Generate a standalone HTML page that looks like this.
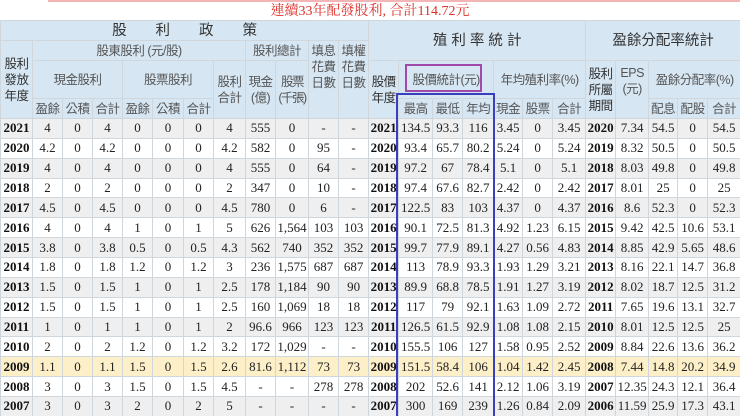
<!DOCTYPE html>
<html><head><meta charset="utf-8"><style>
html,body{margin:0;width:740px;height:416px;overflow:hidden}
body{background:#fff;position:relative;font-family:"Liberation Serif","Noto Serif CJK SC",serif;}
.top{position:absolute;left:48px;top:0;width:692px;height:2px;background:#f3b5b5}
.title{position:absolute;left:0;top:3px;width:740px;height:17px;text-align:center;color:#e0302a;font-size:14px;line-height:17px;font-family:"Liberation Serif","Noto Serif CJK TC",serif}
table{position:absolute;left:0;top:20px;border-collapse:collapse;table-layout:fixed;width:740px}
td{border:1px solid #cfd6dc;padding:0;text-align:center;font-size:13px;color:#222;overflow:hidden;white-space:nowrap}
thead td{background:#d6e6f2;color:#555;font-family:"Liberation Sans","Noto Sans CJK TC",sans-serif;font-size:12.5px;line-height:16px;letter-spacing:-0.5px}
thead td.k{color:#333;font-size:14.5px;letter-spacing:0}
tbody tr{height:19.87px}
tbody tr:nth-child(odd) td{background:#efefef}
tbody tr:nth-child(even) td{background:#fff}
tbody tr.y td{background:#fdf0c8}
td.b{font-weight:bold;color:#111}
.blue{position:absolute;left:396px;top:93px;width:95px;height:330px;border:2px solid #3a3fc0}
.pur{position:absolute;left:405px;top:64px;width:73px;height:24px;border:2px solid #a24aa8}
</style></head><body>
<div class="top"></div>
<div class="title">連續33年配發股利, 合計114.72元</div>
<table>
<colgroup>
<col style="width:32px"><col style="width:30px"><col style="width:30px"><col style="width:30px"><col style="width:30px"><col style="width:31px"><col style="width:30px"><col style="width:32px"><col style="width:30px"><col style="width:33px"><col style="width:30px"><col style="width:30px">
<col style="width:30px"><col style="width:34px"><col style="width:30px"><col style="width:31px"><col style="width:29px"><col style="width:30px"><col style="width:33px"><col style="width:30px"><col style="width:33px"><col style="width:29px"><col style="width:30px"><col style="width:33px">
</colgroup>
<thead>
<tr style="height:20px"><td colspan="12" class="k">股　　利　　政　　策</td><td colspan="7" rowspan="2" class="k">殖 利 率 統 計</td><td colspan="5" rowspan="2" class="k">盈餘分配率統計</td></tr>
<tr style="height:20px"><td rowspan="3" style="color:#333">股利<br>發放<br>年度</td><td colspan="7">股東股利 (元/股)</td><td colspan="2">股利總計</td><td rowspan="3" style="vertical-align:top;padding-top:2px">填息<br>花費<br>日數</td><td rowspan="3" style="vertical-align:top;padding-top:2px">填權<br>花費<br>日數</td></tr>
<tr style="height:38px"><td colspan="3">現金股利</td><td colspan="3">股票股利</td><td rowspan="2">股利<br>合計</td><td rowspan="2">現金<br>(億)</td><td rowspan="2" style="letter-spacing:-1.5px">股票<br>(千張)</td><td rowspan="2" style="color:#333">股價<br>年度</td><td colspan="3">股價統計(元)</td><td colspan="3">年均殖利率(%)</td><td rowspan="2" style="color:#333">股利<br>所屬<br>期間</td><td rowspan="2" style="vertical-align:top;padding-top:4px">EPS<br>(元)</td><td colspan="3">盈餘分配率(%)</td></tr>
<tr style="height:20px"><td>盈餘</td><td>公積</td><td>合計</td><td>盈餘</td><td>公積</td><td>合計</td><td>最高</td><td>最低</td><td>年均</td><td>現金</td><td>股票</td><td>合計</td><td>配息</td><td>配股</td><td>合計</td></tr>
</thead>
<tbody>
<tr><td class="b">2021</td><td>4</td><td>0</td><td>4</td><td>0</td><td>0</td><td>0</td><td>4</td><td>555</td><td>0</td><td>-</td><td>-</td><td class="b">2021</td><td>134.5</td><td>93.3</td><td>116</td><td>3.45</td><td>0</td><td>3.45</td><td class="b">2020</td><td>7.34</td><td>54.5</td><td>0</td><td>54.5</td></tr>
<tr><td class="b">2020</td><td>4.2</td><td>0</td><td>4.2</td><td>0</td><td>0</td><td>0</td><td>4.2</td><td>582</td><td>0</td><td>95</td><td>-</td><td class="b">2020</td><td>93.4</td><td>65.7</td><td>80.2</td><td>5.24</td><td>0</td><td>5.24</td><td class="b">2019</td><td>8.32</td><td>50.5</td><td>0</td><td>50.5</td></tr>
<tr><td class="b">2019</td><td>4</td><td>0</td><td>4</td><td>0</td><td>0</td><td>0</td><td>4</td><td>555</td><td>0</td><td>64</td><td>-</td><td class="b">2019</td><td>97.2</td><td>67</td><td>78.4</td><td>5.1</td><td>0</td><td>5.1</td><td class="b">2018</td><td>8.03</td><td>49.8</td><td>0</td><td>49.8</td></tr>
<tr><td class="b">2018</td><td>2</td><td>0</td><td>2</td><td>0</td><td>0</td><td>0</td><td>2</td><td>347</td><td>0</td><td>10</td><td>-</td><td class="b">2018</td><td>97.4</td><td>67.6</td><td>82.7</td><td>2.42</td><td>0</td><td>2.42</td><td class="b">2017</td><td>8.01</td><td>25</td><td>0</td><td>25</td></tr>
<tr><td class="b">2017</td><td>4.5</td><td>0</td><td>4.5</td><td>0</td><td>0</td><td>0</td><td>4.5</td><td>780</td><td>0</td><td>6</td><td>-</td><td class="b">2017</td><td>122.5</td><td>83</td><td>103</td><td>4.37</td><td>0</td><td>4.37</td><td class="b">2016</td><td>8.6</td><td>52.3</td><td>0</td><td>52.3</td></tr>
<tr><td class="b">2016</td><td>4</td><td>0</td><td>4</td><td>1</td><td>0</td><td>1</td><td>5</td><td>626</td><td>1,564</td><td>103</td><td>103</td><td class="b">2016</td><td>90.1</td><td>72.5</td><td>81.3</td><td>4.92</td><td>1.23</td><td>6.15</td><td class="b">2015</td><td>9.42</td><td>42.5</td><td>10.6</td><td>53.1</td></tr>
<tr><td class="b">2015</td><td>3.8</td><td>0</td><td>3.8</td><td>0.5</td><td>0</td><td>0.5</td><td>4.3</td><td>562</td><td>740</td><td>352</td><td>352</td><td class="b">2015</td><td>99.7</td><td>77.9</td><td>89.1</td><td>4.27</td><td>0.56</td><td>4.83</td><td class="b">2014</td><td>8.85</td><td>42.9</td><td>5.65</td><td>48.6</td></tr>
<tr><td class="b">2014</td><td>1.8</td><td>0</td><td>1.8</td><td>1.2</td><td>0</td><td>1.2</td><td>3</td><td>236</td><td>1,575</td><td>687</td><td>687</td><td class="b">2014</td><td>113</td><td>78.9</td><td>93.3</td><td>1.93</td><td>1.29</td><td>3.21</td><td class="b">2013</td><td>8.16</td><td>22.1</td><td>14.7</td><td>36.8</td></tr>
<tr><td class="b">2013</td><td>1.5</td><td>0</td><td>1.5</td><td>1</td><td>0</td><td>1</td><td>2.5</td><td>178</td><td>1,184</td><td>90</td><td>90</td><td class="b">2013</td><td>89.9</td><td>68.8</td><td>78.5</td><td>1.91</td><td>1.27</td><td>3.19</td><td class="b">2012</td><td>8.02</td><td>18.7</td><td>12.5</td><td>31.2</td></tr>
<tr><td class="b">2012</td><td>1.5</td><td>0</td><td>1.5</td><td>1</td><td>0</td><td>1</td><td>2.5</td><td>160</td><td>1,069</td><td>18</td><td>18</td><td class="b">2012</td><td>117</td><td>79</td><td>92.1</td><td>1.63</td><td>1.09</td><td>2.72</td><td class="b">2011</td><td>7.65</td><td>19.6</td><td>13.1</td><td>32.7</td></tr>
<tr><td class="b">2011</td><td>1</td><td>0</td><td>1</td><td>1</td><td>0</td><td>1</td><td>2</td><td>96.6</td><td>966</td><td>123</td><td>123</td><td class="b">2011</td><td>126.5</td><td>61.5</td><td>92.9</td><td>1.08</td><td>1.08</td><td>2.15</td><td class="b">2010</td><td>8.01</td><td>12.5</td><td>12.5</td><td>25</td></tr>
<tr><td class="b">2010</td><td>2</td><td>0</td><td>2</td><td>1.2</td><td>0</td><td>1.2</td><td>3.2</td><td>172</td><td>1,029</td><td>-</td><td>-</td><td class="b">2010</td><td>155.5</td><td>106</td><td>127</td><td>1.58</td><td>0.95</td><td>2.52</td><td class="b">2009</td><td>8.84</td><td>22.6</td><td>13.6</td><td>36.2</td></tr>
<tr class="y"><td class="b">2009</td><td>1.1</td><td>0</td><td>1.1</td><td>1.5</td><td>0</td><td>1.5</td><td>2.6</td><td>81.6</td><td>1,112</td><td>73</td><td>73</td><td class="b">2009</td><td>151.5</td><td>58.4</td><td>106</td><td>1.04</td><td>1.42</td><td>2.45</td><td class="b">2008</td><td>7.44</td><td>14.8</td><td>20.2</td><td>34.9</td></tr>
<tr><td class="b">2008</td><td>3</td><td>0</td><td>3</td><td>1.5</td><td>0</td><td>1.5</td><td>4.5</td><td>-</td><td>-</td><td>278</td><td>278</td><td class="b">2008</td><td>202</td><td>52.6</td><td>141</td><td>2.12</td><td>1.06</td><td>3.19</td><td class="b">2007</td><td>12.35</td><td>24.3</td><td>12.1</td><td>36.4</td></tr>
<tr><td class="b">2007</td><td>3</td><td>0</td><td>3</td><td>2</td><td>0</td><td>2</td><td>5</td><td>-</td><td>-</td><td>-</td><td>-</td><td class="b">2007</td><td>300</td><td>169</td><td>239</td><td>1.26</td><td>0.84</td><td>2.09</td><td class="b">2006</td><td>11.59</td><td>25.9</td><td>17.3</td><td>43.1</td></tr>
</tbody>
</table>
<div class="pur"></div>
<div class="blue"></div>
</body></html>
